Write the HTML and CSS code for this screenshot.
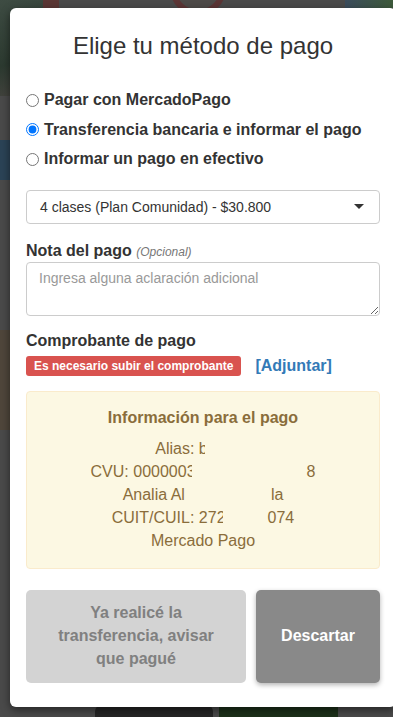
FILE: index.html
```html
<!DOCTYPE html>
<html lang="es">
<head>
    <meta charset="UTF-8">
    <meta name="viewport" content="width=device-width, initial-scale=1.0">
    <title>Elige tu método de pago</title>
    <link rel="stylesheet" href="styles.css">
</head>
<body>
    <!-- pagina de fondo, tapada por el modal -->
    <div class="fondo">
        <div class="f-verde"></div>
        <div class="f-rojo"></div>
        <div class="f-circulo"></div>
        <div class="f-derecha"></div>
        <div class="f-azul"></div>
        <div class="f-marron"></div>
        <div class="f-pill1"></div>
        <div class="f-pill2"></div>
    </div>

    <div class="modal">
        <h2 class="titulo">Elige tu método de pago</h2>

        <div class="metodos">
            <label class="metodo"><input type="radio" name="metodo"> Pagar con MercadoPago</label>
            <label class="metodo"><input type="radio" name="metodo" checked> Transferencia bancaria e informar el pago</label>
            <label class="metodo"><input type="radio" name="metodo"> Informar un pago en efectivo</label>
        </div>

        <div class="combo">
            <span>4 clases (Plan Comunidad) - $30.800</span>
            <span class="caret"></span>
        </div>

        <div class="etiqueta">Nota del pago <em>(Opcional)</em></div>
        <textarea class="nota" placeholder="Ingresa alguna aclaración adicional"></textarea>

        <div class="etiqueta comp">Comprobante de pago</div>
        <div class="adjunto">
            <span class="badge">Es necesario subir el comprobante</span>
            <a class="adjuntar">[Adjuntar]</a>
        </div>

        <div class="alerta">
            <div class="alerta-titulo">Información para el pago</div>
            <div class="linea">Alias: b<span class="tapa t1"></span></div>
            <div class="linea">CVU: 0000003<span class="tapa t2"></span>8</div>
            <div class="linea">Analia Al<span class="tapa t3"></span>la</div>
            <div class="linea">CUIT/CUIL: 272<span class="tapa t4"></span>074</div>
            <div class="linea">Mercado Pago</div>
        </div>

        <div class="botones">
            <button class="btn btn-avisar">Ya realicé la transferencia, avisar que pagué</button>
            <button class="btn btn-descartar">Descartar</button>
        </div>
    </div>
</body>
</html>
```

FILE: styles.css
```css
*{
    margin: 0;
    padding: 0;
    box-sizing: border-box;
}
body{
    width: 393px;
    height: 717px;
    overflow: hidden;
    position: relative;
    background: #4a4a4a;
    font-family: "Liberation Sans", Arial, sans-serif;
    color: #333;
}

/* fondo */
.fondo{
    position: absolute;
    top: 0;
    left: 0;
    width: 393px;
    height: 717px;
}
.fondo div{
    position: absolute;
}
.f-verde{
    left: 0; top: 0; width: 43px; height: 96px;
    background: linear-gradient(160deg, #3e4c43, #2c3a30 60%, #4a4642);
}
.f-rojo{
    left: 43px; top: 0; width: 16px; height: 8px;
    background: #5a3634;
}
.f-circulo{
    left: 170px; top: -40px; width: 56px; height: 56px;
    border-radius: 50%;
    border: 6px solid #5b3535;
    background: #4e4a48;
}
.f-derecha{
    left: 345px; top: 0; width: 48px; height: 8px;
    background: linear-gradient(90deg, #3b4c5c, #3d5a3a);
}
.f-azul{
    left: 0; top: 140px; width: 10px; height: 40px;
    background: #2b4356;
}
.f-marron{
    left: 0; top: 330px; width: 10px; height: 100px;
    background: #4f463b;
}
.f-pill1{
    left: 95px; top: 704px; width: 118px; height: 26px;
    border-radius: 8px;
    background: #262626;
}
.f-pill2{
    left: 219px; top: 704px; width: 119px; height: 26px;
    background: #1c3019;
}

/* modal */
.modal{
    position: relative;
    margin: 8px 0 0 10px;
    width: 386px;
    padding: 25px 16px 24px;
    background: #fff;
    border-radius: 6px;
    box-shadow: 0 3px 9px rgba(0,0,0,0.5);
}
.titulo{
    font-size: 24px;
    font-weight: normal;
    line-height: 26.4px;
    text-align: center;
    color: #333;
    margin-bottom: 30.6px;
}
.metodos{
    display: flex;
    flex-direction: column;
    gap: 9.5px;
}
.metodo{
    display: flex;
    align-items: center;
    font-size: 16px;
    font-weight: bold;
    line-height: 20px;
    color: #333;
}
.metodo input{
    width: 13px;
    height: 13px;
    margin: 0 5px 0 0;
}
.combo{
    margin-top: 20.5px;
    height: 34px;
    border: 1px solid #ccc;
    border-radius: 4px;
    padding: 0 13px;
    display: flex;
    align-items: center;
    justify-content: space-between;
    font-size: 14px;
    color: #333;
}
.caret{
    width: 0;
    height: 0;
    border-left: 5px solid transparent;
    border-right: 5px solid transparent;
    border-top: 5px solid #333;
    margin-right: 2px;
}
.etiqueta{
    margin-top: 17px;
    font-size: 16px;
    font-weight: bold;
    line-height: 20px;
    color: #333;
}
.etiqueta em{
    font-size: 12px;
    font-weight: normal;
    color: #777;
}
.nota{
    display: block;
    width: 100%;
    height: 54px;
    padding: 5px 12px;
    border: 1px solid #ccc;
    border-radius: 4px;
    font-family: "Liberation Sans", Arial, sans-serif;
    font-size: 14px;
    line-height: 20px;
    color: #555;
    resize: vertical;
}
.nota::placeholder{
    color: #999;
}
.etiqueta.comp{
    margin-top: 15px;
}
.adjunto{
    margin-top: 5px;
    display: flex;
    align-items: center;
    gap: 14px;
}
.badge{
    display: inline-block;
    height: 20px;
    line-height: 20px;
    padding: 0 8px;
    background: #d9534f;
    color: #fff;
    font-size: 12px;
    font-weight: bold;
    border-radius: 3px;
}
.adjuntar{
    color: #337ab7;
    font-size: 16px;
    font-weight: bold;
    cursor: pointer;
}
.alerta{
    margin-top: 15px;
    padding: 15px;
    background: #fcf8e3;
    border: 1px solid #faebcc;
    border-radius: 4px;
    color: #8a6d3b;
    text-align: center;
    font-size: 16px;
    line-height: 22.86px;
}
.alerta-titulo{
    font-weight: bold;
    margin-bottom: 9px;
}
.linea{
    white-space: nowrap;
}
.tapa{
    display: inline-block;
    height: 20px;
    vertical-align: middle;
    background: #fcf8e3;
}
.t1{ width: 46px; margin-left: -3px; }
.t2{ width: 119px; margin-left: -4px; margin-right: -4px; }
.t3{ width: 92px; margin-right: -6px; }
.t4{ width: 50px; margin-left: -3px; margin-right: -5px; }

.botones{
    margin-top: 21px;
    display: grid;
    grid-template-columns: 220px 1fr;
    gap: 10px;
}
.btn{
    border: none;
    border-radius: 5px;
    font-family: "Liberation Sans", Arial, sans-serif;
    font-size: 16px;
    font-weight: bold;
    line-height: 22.86px;
    padding: 12.6px 20px;
    text-align: center;
}
.btn-avisar{
    background: #d3d3d3;
    color: #808080;
}
.btn-descartar{
    background: #898989;
    color: #fff;
    box-shadow: 0 2px 5px rgba(0,0,0,0.3);
}
```
